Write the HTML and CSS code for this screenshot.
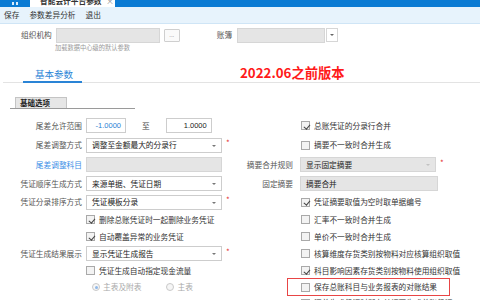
FILE: index.html
```html
<!DOCTYPE html>
<html lang="zh">
<head>
<meta charset="utf-8">
<link rel="stylesheet" href="styles.css">
</head>
<body>
<div class="topbar">
  <div class="home"><span></span><span></span></div>
  <div class="tab"><span class="tab-title">智能会计平台参数</span><span class="tab-close">×</span></div>
</div>
<div class="toolbar"><span>保存</span><span>参数差异分析</span><span>退出</span></div>
<div class="org">
  <div class="org-row">
    <span class="org-label">组织机构</span>
    <div class="inp grey org-inp"></div>
    <div class="btn-dots">...</div>
    <span class="book-label">账簿</span>
    <div class="inp grey book-inp"></div>
    <div class="btn-drop"><i></i></div>
  </div>
  <div class="hint">加载数据中心级的默认参数</div>
</div>
<div class="tabs"><div class="tab-active">基本参数</div></div>
<div class="note">2022.06之前版本</div>
<div class="section"><div class="sec-tab">基础选项</div></div>
<div class="form">
  <!-- row 1 -->
  <div class="lbl">尾差允许范围</div>
  <div class="ctl range"><div class="inp num blue w40">-1.0000</div><span class="to">至</span><div class="inp num w46">1.0000</div></div>
  <div></div>
  <div class="ctl chk"><span class="cb on"></span><span>总账凭证的分录行合并</span></div>
  <!-- row 2 -->
  <div class="lbl">尾差调整方式</div>
  <div class="ctl"><div class="sel">调整至金额最大的分录行<i class="arr"></i></div><span class="req">*</span></div>
  <div></div>
  <div class="ctl chk"><span class="cb"></span><span>摘要不一致时合并生成</span></div>
  <!-- row 3 -->
  <div class="lbl link">尾差调整科目</div>
  <div class="ctl"><div class="inp grey w136"></div></div>
  <div class="lbl">摘要合并规则</div>
  <div class="ctl"><div class="sel grey w138">显示固定摘要<i class="arr light"></i></div><span class="req">*</span></div>
  <!-- row 4 -->
  <div class="lbl">凭证顺序生成方式</div>
  <div class="ctl"><div class="sel">来源单据、凭证日期<i class="arr"></i></div></div>
  <div class="lbl">固定摘要</div>
  <div class="ctl"><div class="inp grey w138 txt">摘要合并</div></div>
  <!-- row 5 -->
  <div class="lbl">凭证分录排序方式</div>
  <div class="ctl"><div class="sel">凭证模板分录<i class="arr"></i></div><span class="req">*</span></div>
  <div></div>
  <div class="ctl chk"><span class="cb on"></span><span>凭证摘要取值为空时取单据编号</span></div>
  <!-- row 6 -->
  <div></div>
  <div class="ctl chk"><span class="cb on"></span><span>删除总账凭证时一起删除业务凭证</span></div>
  <div></div>
  <div class="ctl chk"><span class="cb"></span><span>汇率不一致时合并生成</span></div>
  <!-- row 7 -->
  <div></div>
  <div class="ctl chk"><span class="cb on"></span><span>自动覆盖异常的业务凭证</span></div>
  <div></div>
  <div class="ctl chk"><span class="cb"></span><span>单价不一致时合并生成</span></div>
  <!-- row 8 -->
  <div class="lbl">凭证生成结果展示</div>
  <div class="ctl"><div class="sel">显示凭证生成报告<i class="arr"></i></div><span class="req">*</span></div>
  <div></div>
  <div class="ctl chk"><span class="cb"></span><span>核算维度存货类别按物料对应核算组织取值</span></div>
  <!-- row 9 -->
  <div></div>
  <div class="ctl chk"><span class="cb"></span><span>凭证生成自动指定现金流量</span></div>
  <div></div>
  <div class="ctl chk"><span class="cb on"></span><span>科目影响因素存货类别按物料使用组织取值</span></div>
  <!-- row 10 -->
  <div></div>
  <div class="ctl radios"><span class="rd on"></span><span class="dis">主表及附表</span><span class="rd second"></span><span class="dis">主表</span></div>
  <div></div>
  <div class="ctl chk marked"><span class="cb"></span><span>保存总账科目与业务报表的对账结果</span><span class="redbox"></span></div>
  <!-- row 11 -->
  <div></div>
  <div></div>
  <div></div>
  <div class="ctl chk"><span class="cb"></span><span>汇总生成凭证时所有单据不生成总账凭证</span></div>
</div>
</body>
</html>
```
FILE: styles.css
```css
* { box-sizing: border-box; }
html, body { margin: 0; padding: 0; }
body {
  width: 480px;
  height: 300px;
  overflow: hidden;
  position: relative;
  background: #fff;
  color: #333;
  font-family: "Noto Sans CJK SC", "Noto Sans", sans-serif;
  font-size: 7.7px;
  line-height: 1;
}

/* top blue bar with tab */
.topbar {
  height: 7px;
  background: #0b7bd3;
  display: flex;
  overflow: hidden;
}
.home {
  width: 30px;
  display: flex;
  justify-content: center;
  align-items: flex-end;
  gap: 2px;
  padding-bottom: 2px;
}
.home span { width: 2px; height: 3px; background: #d9ecfb; }
.tab {
  width: 85px;
  height: 7px;
  background: #fff;
  display: flex;
  align-items: flex-start;
  overflow: hidden;
}
.tab-title {
  display: block;
  margin-top: -4px;
  line-height: 10px;
  padding-left: 10px;
  font-weight: 700;
  color: #333;
  width: 76px;
}
.tab-close {
  display: block;
  margin-top: -4px;
  line-height: 10px;
  color: #888;
  font-size: 8px;
}

/* toolbar */
.toolbar {
  height: 17px;
  background: #e7f3fc;
  border-bottom: 1px solid #cfe5f6;
  display: flex;
  align-items: center;
  gap: 10px;
  padding-left: 4px;
  color: #333;
}

/* org row */
.org { padding-top: 3px; }
.org-row {
  display: flex;
  align-items: center;
  height: 16px;
  padding-left: 21px;
}
.org-label, .book-label { color: #555; }
.org-inp { width: 104px; height: 16px; margin-left: 4px; }
.btn-dots {
  width: 16px;
  height: 13px;
  margin-left: 4px;
  border: 1px solid #cfcfcf;
  border-radius: 1px;
  background: #fafafa;
  color: #999;
  font-size: 6px;
  display: flex;
  align-items: center;
  justify-content: center;
}
.book-label { margin-left: 37px; }
.book-inp { width: 88px; height: 15px; margin-left: 5px; }
.btn-drop {
  width: 12px;
  height: 14px;
  margin-left: 1px;
  border: 1px solid #d6d6d6;
  background: #fff;
  display: flex;
  align-items: center;
  justify-content: center;
}
.btn-drop i {
  width: 0; height: 0;
  border-left: 2px solid transparent;
  border-right: 2px solid transparent;
  border-top: 2px solid #666;
}
.hint {
  margin-top: 1px;
  padding-left: 55px;
  font-size: 6.25px;
  line-height: 7px;
  color: #999;
}

/* tabs */
.tabs {
  margin-top: 15px;
  margin-left: 3px;
  border-bottom: 1px solid #e3e3e3;
  display: flex;
  height: 17px;
}
.tab-active {
  margin-left: 20px;
  padding: 1px 9px 0 12px;
  font-size: 9.5px;
  line-height: 14px;
  color: #2a84d6;
  border-bottom: 2px solid #2a84d6;
  margin-bottom: -1px;
}
.note {
  position: absolute;
  left: 240px;
  top: 64px;
  font-size: 13.3px;
  line-height: 18px;
  font-weight: 700;
  color: #ff1a1a;
  background: transparent;
}

/* section tab */
.section {
  margin-top: 14px;
  margin-left: 10px;
  width: 125px;
  border-bottom: 1px solid #9a9a9a;
  display: flex;
}
.sec-tab {
  margin-left: 5px;
  width: 52px;
  height: 11px;
  background: #e6e6e6;
  border: 1px solid #c4c4c4;
  border-bottom: none;
  font-weight: 700;
  font-size: 7.5px;
  line-height: 10px;
  color: #222;
  padding-left: 4px;
}

/* form grid */
.form {
  margin-top: 7px;
  display: grid;
  grid-template-columns: 86px 154px 60px 1fr;
  grid-template-rows: 19px 20px 19px 19px 18px 17px 17px 17px 17px 16px 16px;
}
.lbl {
  text-align: right;
  padding-right: 4px;
  color: #555;
  display: flex;
  align-items: center;
  justify-content: flex-end;
  white-space: nowrap;
}
.form > .lbl:nth-child(4n+3) { padding-right: 7px; }
.lbl.link { color: #3a8ee6; }
.ctl {
  display: flex;
  align-items: center;
  white-space: nowrap;
  position: relative;
}
.inp {
  height: 15px;
  border: 1px solid #cdcdcd;
  background: #fff;
}
.inp.grey { background: #e5e5e5; border-color: #d6d6d6; }
.inp.txt { display: flex; align-items: center; padding-left: 5px; color: #222; }
.inp.num {
  display: flex;
  align-items: center;
  justify-content: flex-end;
  padding-right: 4px;
  color: #222;
  font-family: "Liberation Sans", "Noto Sans", sans-serif;
  font-size: 7.5px;
}
.inp.blue { color: #2a7fd4; }
.w40 { width: 40px; }
.w46 { width: 46px; }
.w136 { width: 136px; }
.w138 { width: 138px; }
.to { margin: 0 16px; color: #444; }
.sel {
  width: 136px;
  height: 15px;
  border: 1px solid #cdcdcd;
  background: #fff;
  display: flex;
  align-items: center;
  padding-left: 5px;
  color: #222;
  position: relative;
}
.sel.grey { background: #e5e5e5; border-color: #d6d6d6; }
.arr {
  position: absolute;
  right: 5px;
  top: 6px;
  width: 0; height: 0;
  border-left: 2px solid transparent;
  border-right: 2px solid transparent;
  border-top: 2.5px solid #777;
}
.arr.light { border-top-color: #c2c2c2; }
.req {
  color: #e53333;
  margin-left: 4px;
  font-size: 8px;
  margin-top: -4px;
}
.chk { padding-left: 1px; }
.form > .ctl.chk:nth-child(4n+2) { padding-left: 0; }
.cb {
  width: 9px;
  height: 9px;
  border: 1px solid #a9a9a9;
  background: #f3f3f3;
  margin-right: 4px;
  position: relative;
  flex: none;
}
.cb.on::after {
  content: "";
  position: absolute;
  left: 2.5px;
  top: 0.5px;
  width: 2.5px;
  height: 5px;
  border-right: 1.2px solid #444;
  border-bottom: 1.2px solid #444;
  transform: rotate(40deg);
}
.radios { padding-left: 6px; }
.rd {
  width: 8px;
  height: 8px;
  border: 1px solid #c9c9c9;
  border-radius: 50%;
  background: #f6f6f6;
  margin-right: 3px;
  position: relative;
  flex: none;
}
.rd.on::after {
  content: "";
  position: absolute;
  left: 1.5px;
  top: 1.5px;
  width: 3px;
  height: 3px;
  border-radius: 50%;
  background: #8fb8e8;
}
.rd.second { margin-left: 25px; }
.dis { color: #aaa; }
.redbox {
  position: absolute;
  left: -13px;
  top: -1px;
  width: 163px;
  height: 18px;
  border: 1.5px solid #e84545;
}
```
